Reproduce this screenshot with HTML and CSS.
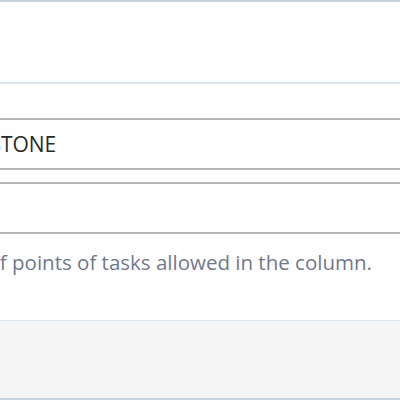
FILE: index.html
```html
<html>
<head>
<link rel="stylesheet" href="styles.css">
</head>
<body>
<div class="modal">
    <div class="modal-header"></div>
    <div class="modal-body">
        <div class="field">
            <input class="text-input" type="text" value="MILESTONE">
        </div>
        <div class="field">
            <input class="text-input" type="text" value="">
        </div>
        <p class="help">Maximum number of points of tasks allowed in the column.</p>
    </div>
    <div class="modal-footer"></div>
</div>
</body>
</html>
```

FILE: styles.css
```css
body {
    margin: 0;
    overflow: hidden;
    font-family: "Open Sans", sans-serif;
    background-color: white;
}
.modal {
    width: 400px;
    height: 400px;
    border-top: 2px solid #c6d3de;
    box-sizing: border-box;
    display: flex;
    flex-direction: column;
}
.modal-header {
    height: 80px;
    border-bottom: 2px solid #dce6ee;
}
.modal-body {
    box-sizing: border-box;
    padding-top: 34px;
    height: 237px;
    border-bottom: 1px solid #dce6ee;
}
.field {
    margin-left: -78px;
    margin-bottom: 12px;
}
.text-input {
    width: 600px;
    height: 52px;
    border: 2px solid #b3b6be;
    padding: 0 18px;
    font-family: "Open Sans", sans-serif;
    font-size: 21px;
    color: #2a2a2a;
    box-sizing: border-box;
}
.help {
    margin: 14px 0 0 -196px;
    width: 700px;
    font-size: 20.5px;
    color: #6f7890;
}
.modal-footer {
    flex: 1;
    background-color: #f5f5f5;
    border-bottom: 2px solid #c6d3de;
}
```
